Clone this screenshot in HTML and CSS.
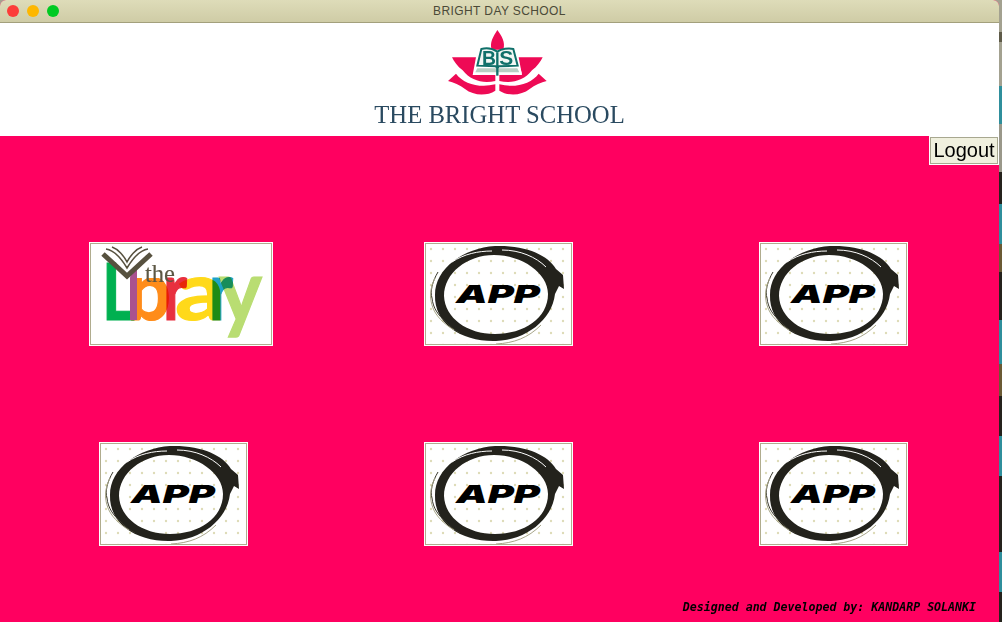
FILE: index.html
```html
<!DOCTYPE html>
<html lang="en">
<head>
<meta charset="utf-8">
<title>BRIGHT DAY SCHOOL</title>
<link rel="stylesheet" href="styles.css">
</head>
<body>
<svg class="defs" width="0" height="0" aria-hidden="true">
  <defs>
    <pattern id="dots" width="12" height="12" patternUnits="userSpaceOnUse">
      <circle cx="7" cy="7" r="1.2" fill="#dedbb8"/>
    </pattern>
    <clipPath id="lowCase"><rect x="0" y="36" width="184" height="70"/></clipPath>
    <symbol id="app" viewBox="2 2 145 100">
      <rect width="149" height="104" fill="#fff"/>
      <rect width="149" height="104" fill="url(#dots)"/>
      <path fill="#23221c" fill-rule="evenodd" d="M71,4 C102,3 124,13 132,27 L139,33 L140,47 L135,44 L131,52 C128,78 102,98 72,99 C38,100 10,82 11,53 C11,26 40,6 71,4 Z M70,13 C43,13 20,31 20,54 C21,76 43,92 71,92 C100,92 124,76 124,52 C124,31 98,13 70,13 Z"/>
      <path fill="none" stroke="#3a382c" stroke-width="1" d="M14,30 C8,40 6,50 8,56 C9,66 14,73 22,80 C26,84 30,88 36,91"/>
      <path fill="none" stroke="#a8a68a" stroke-width="1" d="M11,36 C6,46 5,56 9,66 C12,74 20,82 30,88"/>
      <path fill="none" stroke="#a8a68a" stroke-width="1" d="M72,102 C90,101 104,96 117,83"/>
      <path fill="none" stroke="#fff" stroke-width="1" d="M28,20 C40,12 54,9 68,9 M78,8 C96,8 112,15 122,25"/>
      <text class="app-word" x="32" y="61" textLength="84" lengthAdjust="spacingAndGlyphs">APP</text>
    </symbol>
  </defs>
</svg>
<div class="window">
  <div class="titlebar">
    <div class="lights"><span class="light red"></span><span class="light amber"></span><span class="light green"></span></div>
    <span class="title">BRIGHT DAY SCHOOL</span>
  </div>
  <header class="masthead">
    <svg class="crest" viewBox="0 0 360 225" width="120" height="75" role="img" aria-label="Bright School crest">
      <g fill="#ee0a55">
        <path d="M172,15 C160,35 148,52 155,74 L190,74 C197,52 185,32 172,15 Z"/>
        <path d="M36,97 L108,97 L98,150 L166,150 L166,168 C130,176 92,168 68,136 C52,124 42,110 36,97 Z"/>
        <path d="M24,168 L48,146 C70,176 118,190 166,178 L166,197 C140,214 100,212 75,192 C60,180 40,172 24,168 Z"/>
        <g transform="translate(344,0) scale(-1,1)">
          <path d="M36,97 L108,97 L98,150 L166,150 L166,168 C130,176 92,168 68,136 C52,124 42,110 36,97 Z"/>
          <path d="M24,168 L48,146 C70,176 118,190 166,178 L166,197 C140,214 100,212 75,192 C60,180 40,172 24,168 Z"/>
        </g>
      </g>
      <path d="M122,72 L172,80 L222,72 L246,146 L100,146 Z" fill="#fff"/>
      <path d="M124,72 C140,68 160,72 172,80 C184,72 205,68 220,72 L233,122 L176,124 L172,130 L168,124 L112,122 Z" fill="#f2f7f4" stroke="#10706a" stroke-width="6"/>
      <path d="M112,130 L232,130 L238,142 L106,142 Z" fill="#b9cfc4"/>
      <path d="M172,82 L172,152" stroke="#10706a" stroke-width="7"/>
      <text class="crest-letter" x="126" y="120" textLength="42" lengthAdjust="spacingAndGlyphs">B</text>
      <text class="crest-letter" x="178" y="120" textLength="42" lengthAdjust="spacingAndGlyphs">S</text>
    </svg>
    <h1 class="school">THE BRIGHT SCHOOL</h1>
  </header>
  <main class="board">
    <div class="toolbar"><button class="logout" type="button">Logout</button></div>
    <div class="grid">
      <a class="tile tile-wide" href="#">
        <svg viewBox="0 0 180 100" width="180" height="100" role="img" aria-label="The Library">
          <rect width="180" height="100" fill="#fff"/>
          <g transform="translate(-2,-2)" class="blend">
            <text class="lib" x="13" y="78" font-size="79" fill="#00b050" stroke="#00b050" textLength="33" lengthAdjust="spacingAndGlyphs">L</text>
            <text class="lib" x="38" y="78" font-size="83" fill="#ff8c1a" stroke="#ff8c1a" textLength="44" lengthAdjust="spacingAndGlyphs" clip-path="url(#lowCase)">b</text>
            <text class="lib" x="74" y="78" font-size="83" fill="#e8303f" stroke="#e8303f" textLength="24" lengthAdjust="spacingAndGlyphs">r</text>
            <text class="lib" x="86" y="78" font-size="83" fill="#ffd91a" stroke="#ffd91a" textLength="50" lengthAdjust="spacingAndGlyphs">a</text>
            <text class="lib" x="120" y="78" font-size="83" fill="#1fa3c8" stroke="#1fa3c8" textLength="24" lengthAdjust="spacingAndGlyphs">r</text>
            <text class="lib" x="130" y="80" font-size="88" fill="#b9dd72" stroke="#b9dd72" textLength="43" lengthAdjust="spacingAndGlyphs">y</text>
          </g>
          <path d="M39,34 L46,34 L46,76 L39,76 Z M39,34 C40,27 43,24 46,22 L46,34 Z" fill="#a9528f"/>
          <text class="lib-the" x="54" y="38" textLength="30" lengthAdjust="spacingAndGlyphs">the</text>
          <path d="M12,10 L36,32 L60,10" fill="none" stroke="#57513f" stroke-width="5"/>
          <path d="M15,5 C22,6 30,14 36,24 C42,14 50,6 57,5 M21,3 C27,5 33,12 36,18 C39,12 45,5 51,3" fill="none" stroke="#57513f" stroke-width="1.5"/>
        </svg>
      </a>
      <a class="tile" href="#"><svg width="145" height="100" role="img" aria-label="App"><use href="#app"/></svg></a>
      <a class="tile" href="#"><svg width="145" height="100" role="img" aria-label="App"><use href="#app"/></svg></a>
      <a class="tile tile-shift" href="#"><svg width="145" height="100" role="img" aria-label="App"><use href="#app"/></svg></a>
      <a class="tile" href="#"><svg width="145" height="100" role="img" aria-label="App"><use href="#app"/></svg></a>
      <a class="tile" href="#"><svg width="145" height="100" role="img" aria-label="App"><use href="#app"/></svg></a>
    </div>
    <footer class="credit">Designed and Developed by: KANDARP SOLANKI</footer>
  </main>
</div>
</body>
</html>
```
FILE: styles.css
```css
* { box-sizing: border-box; }
html, body { height: 100%; }
body {
  margin: 0;
  overflow: hidden;
  background: linear-gradient(to bottom,
    #a3a190 0 32px, #5e5a48 32px 42px, #a3a190 42px 86px, #2f8f9c 86px 124px,
    #9a988a 124px 172px, #25221c 172px 204px, #2f8f9c 204px 244px, #6b5a34 244px 272px,
    #25221c 272px 320px, #2f8f9c 320px 364px, #6b5a34 364px 396px, #25221c 396px 436px,
    #2f8f9c 436px 476px, #25221c 476px 552px, #2f8f9c 552px 592px, #25221c 592px 622px);
  font-family: "Liberation Sans", Arial, sans-serif;
}
.defs { position: absolute; }
.window {
  width: 999px;
  height: 622px;
  display: flex;
  flex-direction: column;
  border-radius: 6px 6px 0 0;
  overflow: hidden;
  background: #ff0060;
}
.titlebar {
  height: 23px;
  flex: none;
  position: relative;
  display: flex;
  align-items: center;
  justify-content: center;
  background: linear-gradient(to bottom, #dedcb9, #cfcca6);
  border-bottom: 1px solid #a3a07c;
}
.lights {
  position: absolute;
  left: 7px;
  top: 5px;
  display: flex;
  gap: 8px;
}
.light { width: 12px; height: 12px; border-radius: 50%; }
.red { background: #fc3d39; }
.amber { background: #fdb700; }
.green { background: #00ca22; }
.title {
  font-size: 12px;
  color: #4b4a38;
  letter-spacing: 0.4px;
}
.masthead {
  height: 113px;
  flex: none;
  background: #fff;
  display: flex;
  flex-direction: column;
  align-items: center;
}
.crest { display: block; margin-top: 2px; flex: none; }
.crest-letter { font: 700 58px "Liberation Sans", sans-serif; fill: #10706a; }
.school {
  margin: 0;
  font: 400 24.7px/30px "Liberation Serif", "Times New Roman", serif;
  color: #2a4a60;
  white-space: nowrap;
}
.board {
  flex: 1;
  min-height: 0;
  display: flex;
  flex-direction: column;
  background: #ff0060;
}
.toolbar { display: flex; justify-content: flex-end; height: 106px; flex: none; }
.logout {
  width: 68px;
  height: 27px;
  padding: 0;
  font: 400 20px "Liberation Sans", Arial, sans-serif;
  color: #000;
  background: #f0f0de;
  border: 1px solid #a8a890;
  outline: 1px solid #fff;
  margin-top: 1px;
  margin-right: 1px;
}
.grid {
  display: grid;
  grid-template-columns: 424px 335px 240px;
  grid-auto-rows: 104px;
  row-gap: 96px;
}
.tile {
  justify-self: start;
  display: block;
  width: 149px;
  height: 104px;
  padding: 1px;
  border: 1px solid #fff;
  background: #fff;
  box-shadow: inset 0 0 0 1px #b0ac8e;
}
.tile svg { display: block; }
.tile-wide { width: 184px; margin-left: 89px; }
.tile-shift { margin-left: 99px; }
.app-word {
  font: italic 900 25px "Inter", "Liberation Sans", sans-serif;
  fill: #000;
}
.blend text { mix-blend-mode: multiply; }
.lib { font-family: "Lato", sans-serif; font-weight: 700; stroke-width: 1.2; }
.lib-the { font: 400 25px "Liberation Serif", serif; fill: #5c5744; stroke: #5c5744; stroke-width: 0.15; }
.credit {
  margin-top: auto;
  padding: 0 23px 8px 0;
  text-align: right;
  font: italic 700 11.6px "DejaVu Sans Mono", "Liberation Mono", monospace;
  color: #000;
  white-space: nowrap;
}
```
